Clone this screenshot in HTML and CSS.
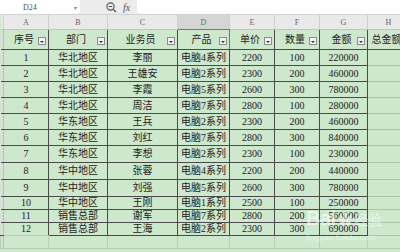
FILE: index.html
```html
<!DOCTYPE html>
<html lang="zh-CN">
<head>
    <meta charset="UTF-8">
    <meta name="viewport" content="width=device-width, initial-scale=1.0">
    <link rel="stylesheet" href="styles.css">
    <title>销售表</title>
</head>
<body>

    <!-- 顶部编辑栏 -->
    <div class="formula-bar">
        <div class="name-box">
            <span class="cell-ref">D24</span>
            <span class="name-arrow">▾</span>
        </div>
        <div class="bar-icons">
            <svg class="zoom-icon" width="11" height="11" viewBox="0 0 11 11">
                <circle cx="4.5" cy="4.5" r="3.6" fill="none" stroke="#555" stroke-width="1.1"/>
                <line x1="2.8" y1="4.5" x2="6.2" y2="4.5" stroke="#555" stroke-width="1"/>
                <line x1="7.2" y1="7.2" x2="10" y2="10" stroke="#555" stroke-width="1.3"/>
            </svg>
            <span class="fx">fx</span>
        </div>
        <div class="formula-input"></div>
    </div>

    <div class="sheet">
        <table class="grid">
            <colgroup>
                <col class="c-row">
                <col class="c-a">
                <col class="c-b">
                <col class="c-c">
                <col class="c-d">
                <col class="c-e">
                <col class="c-f">
                <col class="c-g">
                <col class="c-h">
            </colgroup>
            <tr class="letters">
                <th class="corner"></th>
                <th>A</th><th>B</th><th>C</th><th class="picked">D</th>
                <th>E</th><th>F</th><th>G</th><th>H</th>
            </tr>
            <tr class="head">
                <td class="rh"></td>
                <td>序号<span class="filter"></span></td>
                <td>部门<span class="filter"></span></td>
                <td>业务员<span class="filter"></span></td>
                <td class="picked">产品<span class="filter"></span></td>
                <td>单价<span class="filter"></span></td>
                <td>数量<span class="filter"></span></td>
                <td>金额<span class="filter"></span></td>
                <td>总金额<span class="filter"></span></td>
            </tr>
            <tr><td class="rh"></td><td>1</td><td>华北地区</td><td>李丽</td><td>电脑4系列</td><td>2200</td><td>100</td><td>220000</td><td class="free"></td></tr>
            <tr><td class="rh"></td><td>2</td><td>华北地区</td><td>王雄安</td><td>电脑2系列</td><td>2300</td><td>200</td><td>460000</td><td class="free"></td></tr>
            <tr><td class="rh"></td><td>3</td><td>华北地区</td><td>李霞</td><td>电脑5系列</td><td>2600</td><td>300</td><td>780000</td><td class="free"></td></tr>
            <tr><td class="rh"></td><td>4</td><td>华北地区</td><td>周洁</td><td>电脑7系列</td><td>2800</td><td>100</td><td>280000</td><td class="free"></td></tr>
            <tr><td class="rh"></td><td>5</td><td>华东地区</td><td>王兵</td><td>电脑2系列</td><td>2300</td><td>200</td><td>460000</td><td class="free"></td></tr>
            <tr><td class="rh"></td><td>6</td><td>华东地区</td><td>刘红</td><td>电脑7系列</td><td>2800</td><td>300</td><td>840000</td><td class="free"></td></tr>
            <tr class="tall"><td class="rh"></td><td>7</td><td>华东地区</td><td>李想</td><td>电脑2系列</td><td>2300</td><td>100</td><td>230000</td><td class="free"></td></tr>
            <tr class="tall"><td class="rh"></td><td>8</td><td>华中地区</td><td>张蓉</td><td>电脑4系列</td><td>2200</td><td>200</td><td>440000</td><td class="free"></td></tr>
            <tr class="tall"><td class="rh"></td><td>9</td><td>华中地区</td><td>刘强</td><td>电脑5系列</td><td>2600</td><td>300</td><td>780000</td><td class="free"></td></tr>
            <tr class="short"><td class="rh"></td><td>10</td><td>华中地区</td><td>王刚</td><td>电脑1系列</td><td>2500</td><td>100</td><td>250000</td><td class="free"></td></tr>
            <tr class="short"><td class="rh"></td><td>11</td><td>销售总部</td><td>谢军</td><td>电脑7系列</td><td>2800</td><td>200</td><td>560000</td><td class="free"></td></tr>
            <tr class="short last"><td class="rh"></td><td class="open">12</td><td>销售总部</td><td>王海</td><td>电脑2系列</td><td>2300</td><td>300</td><td>690000</td><td class="free"></td></tr>
            <tr class="empty">
                <td class="rh"></td><td></td><td></td><td></td><td></td><td></td><td></td><td></td><td></td>
            </tr>
        </table>

        <!-- 水印 -->
        <div class="watermark">
            <div class="wm-logo">Bai<span class="paw">✿</span><span class="wm-cn">经验</span></div>
            <div class="wm-url">jingyan.baidu.com</div>
        </div>
    </div>

</body>
</html>
```

FILE: styles.css
```css
/* общий фон */
body {
    margin: 0;
    width: 400px;
    height: 252px;
    overflow: hidden;
    background-color: #cde8cd;
    font-family: "Liberation Serif", "Noto Sans CJK SC", serif;
    color: #222;
}

/* 顶部编辑栏 */
.formula-bar {
    height: 15px;
    display: flex;
    background-color: #ececec;
    border-bottom: 1px solid #d2d2d2;
    box-sizing: border-box;
}

.name-box {
    width: 80px;
    height: 14px;
    background-color: #fff;
    border-radius: 0 0 4px 0;
    display: flex;
    align-items: center;
    font-size: 8px;
    color: #555;
}

.cell-ref {
    margin-left: 23px;
    flex: 1;
}

.name-arrow {
    font-size: 6px;
    margin-right: 3px;
    color: #888;
}

.bar-icons {
    width: 57px;
    display: flex;
    align-items: center;
    padding-left: 26px;
    box-sizing: border-box;
    gap: 6px;
}

.fx {
    font-style: italic;
    font-size: 10px;
    color: #555;
    font-family: "Liberation Serif", serif;
}

.formula-input {
    flex: 1;
    height: 14px;
    background-color: #fff;
    border-radius: 0 0 0 4px;
}

/* таблица */
.sheet {
    position: relative;
}

.grid {
    border-collapse: collapse;
    table-layout: fixed;
    width: 409px;
    font-size: 10px;
}

.c-row { width: 3px; }
.c-a { width: 45px; }
.c-b { width: 59px; }
.c-c { width: 70px; }
.c-d { width: 52px; }
.c-e { width: 45px; }
.c-f { width: 45px; }
.c-g { width: 48px; }
.c-h { width: 42px; }

.grid td {
    height: 15px;
    padding: 0;
    text-align: center;
    white-space: nowrap;
    overflow: hidden;
    border: 1px solid #4a4a4a;
    line-height: 10px;
}

.letters th {
    height: 14px;
    padding: 0;
    font-weight: normal;
    font-size: 8px;
    color: #666;
    background-color: #e9e9e9;
    border-left: 1px solid #cfcfcf;
    border-right: 1px solid #cfcfcf;
    border-bottom: 1px solid #c4c4c4;
}

.letters th.picked {
    background-color: #d5d5d5;
    color: #2f8a4e;
    border-bottom: 1px solid #3f9a5c;
}

.letters .corner {
    border-left: none;
}

.grid td.rh {
    background-color: #dcdcdc;
    border-left: none;
    border-right: 1px solid #bdbdbd;
}

.head td {
    height: 19px;
    position: relative;
    padding-right: 4px;
    line-height: 12px;
}

.head td.picked {
    border-left-color: #3f9a5c;
    border-right-color: #3f9a5c;
}

.head td.rh {
    padding-right: 0;
}

/* кнопка фильтра */
.filter {
    position: absolute;
    right: 2px;
    bottom: 4px;
    width: 6px;
    height: 6px;
    background-color: #f2f2f2;
    border: 1px solid #8c8c8c;
}

.filter::after {
    content: "";
    position: absolute;
    left: 1px;
    top: 3px;
    border-left: 2px solid transparent;
    border-right: 2px solid transparent;
    border-top: 2px solid #333;
}

.grid tr.tall td { height: 16px; }
.grid tr.short td { height: 12px; }

.grid td.free {
    border-top-color: #a9c6a9;
    border-bottom-color: #a9c6a9;
    border-right-color: #a9c6a9;
}

.grid tr.last td.open {
    border-bottom-color: #b5cfb5;
}

.grid tr.empty td {
    height: 12px;
    border: 1px solid #b5cfb5;
    border-top: none;
}

.grid tr.empty td.rh {
    border-right-color: #bdbdbd;
}

/* 水印 */
.watermark {
    position: absolute;
    left: 306px;
    top: 193px;
    color: rgba(255, 255, 255, 0.6);
    font-family: "Liberation Sans", "Noto Sans CJK SC", sans-serif;
}

.wm-logo {
    font-size: 20px;
    font-weight: bold;
    line-height: 20px;
    letter-spacing: -0.5px;
}

.paw {
    font-size: 15px;
    margin: 0 2px;
}

.wm-cn {
    font-size: 14px;
    font-weight: normal;
}

.wm-url {
    font-size: 8px;
    margin-top: 3px;
    letter-spacing: 0.3px;
}
```
